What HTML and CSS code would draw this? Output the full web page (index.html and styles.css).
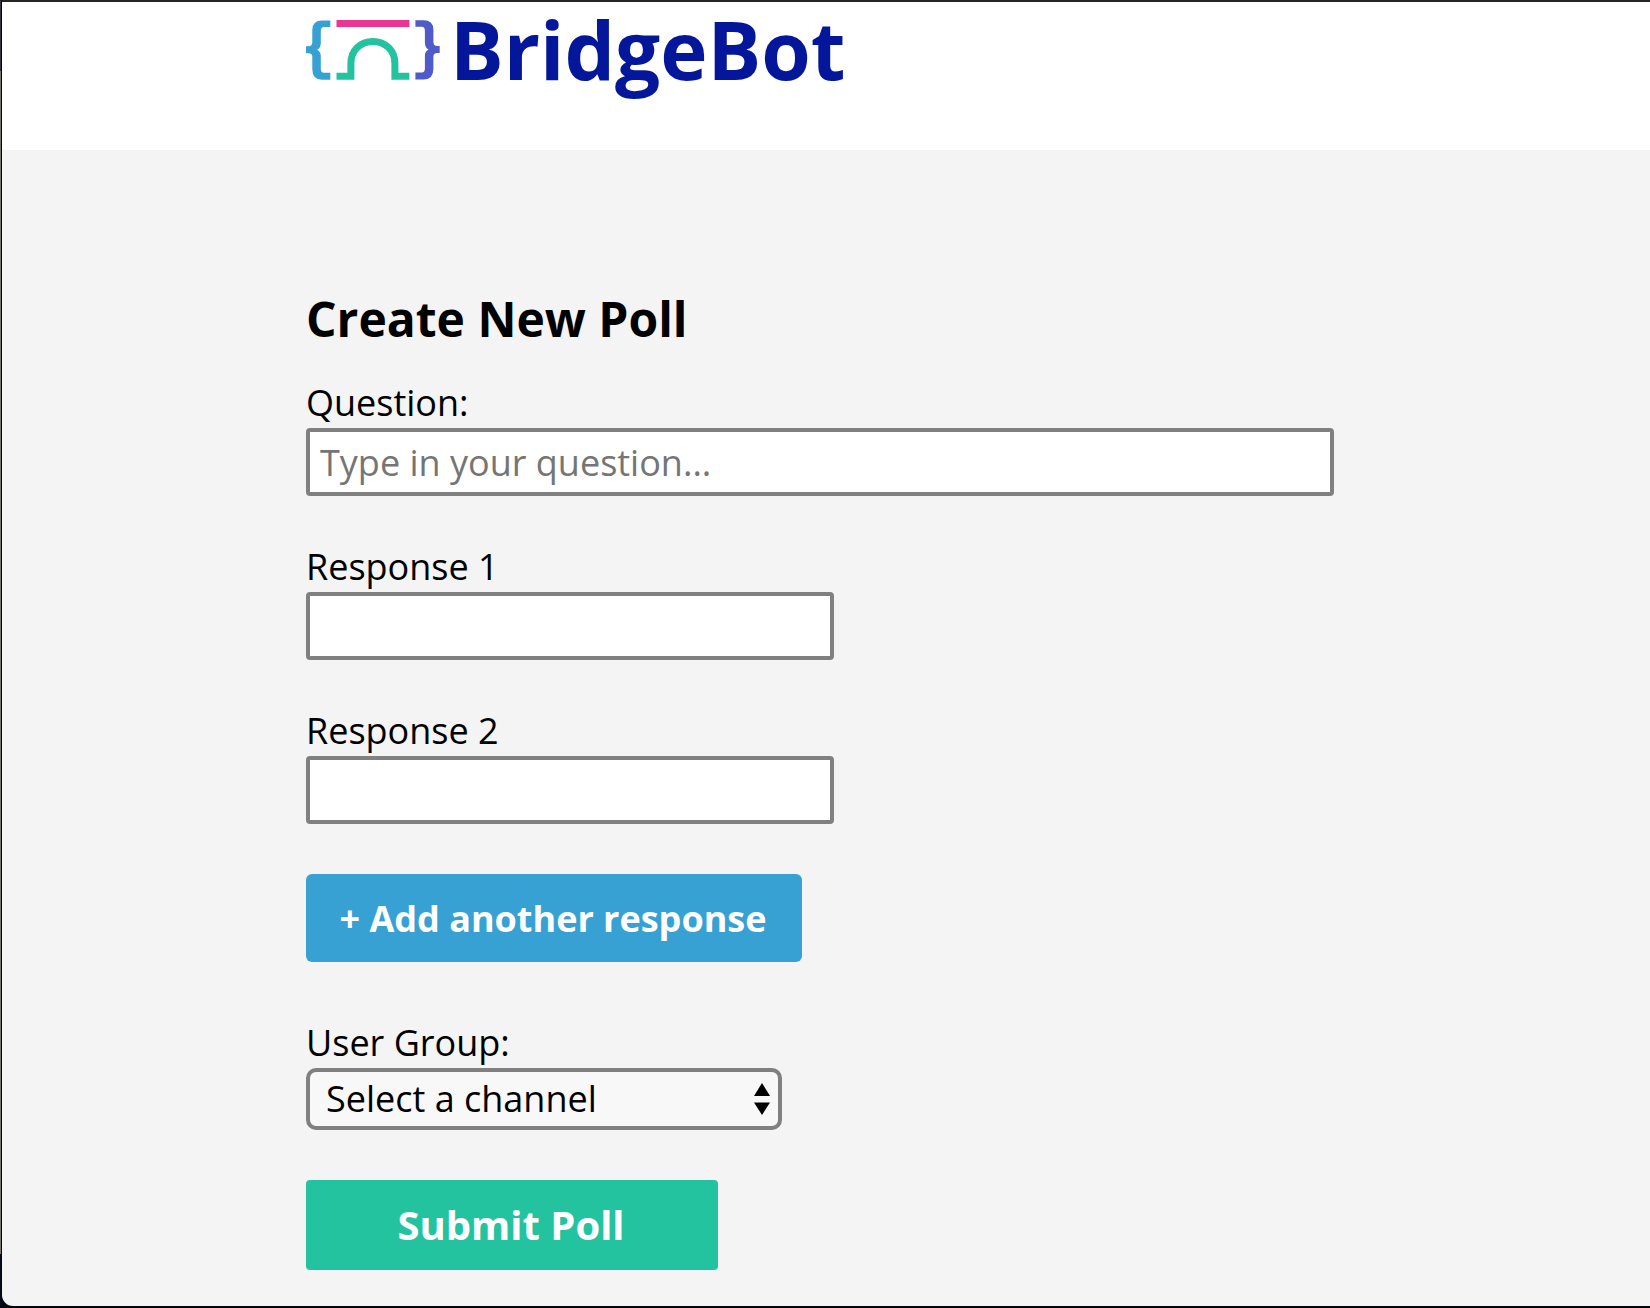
FILE: index.html
```html
<!DOCTYPE html>
<html lang="en">
<head>
<meta charset="utf-8">
<title>BridgeBot</title>
<link rel="stylesheet" href="styles.css">
</head>
<body>
<div class="window">
  <header class="header">
    <svg class="logo" width="134" height="60" viewBox="0 0 134 60">
      <defs>
        <path id="brace" d="M24.3 .5H16Q6.3 .5 6.3 10V22Q6.3 26.2 2.5 26.2H0V33.3H2.5Q6.3 33.3 6.3 37V49Q6.3 59.7 16 59.7H24.3V52.7H18Q14.8 52.7 14.8 49V36Q14.8 31.5 11 29.8Q14.8 28 14.8 23V11Q14.8 7 18 7H24.3Z"/>
      </defs>
      <use href="#brace" fill="#38a1d3"/>
      <path fill="none" stroke-width="7" stroke="#ea3595" d="M30.5 3.6H103.4"/>
      <path fill="none" stroke-width="7" stroke="#24c3a0" d="M30.5 56.2H44.9V43.3C44.9 30.5 54.4 21.4 66.9 21.4S88.9 30.5 88.9 43.3V56.2H103.4"/>
      <use href="#brace" fill="#4f5bc8" transform="translate(133.7 -.3) scale(-1 1)"/>
    </svg>
    <span class="brand">BridgeBot</span>
  </header>
  <main class="main">
    <h1 class="title">Create New Poll</h1>
    <form class="form">
      <div class="field">
        <label class="label" for="question">Question:</label>
        <input class="input input-wide" id="question" type="text" placeholder="Type in your question...">
      </div>
      <div class="field">
        <label class="label" for="response1">Response 1</label>
        <input class="input" id="response1" type="text">
      </div>
      <div class="field">
        <label class="label" for="response2">Response 2</label>
        <input class="input" id="response2" type="text">
      </div>
      <button class="button add" type="button">+ Add another response</button>
      <div class="field group">
        <label class="label" id="group-label">User Group:</label>
        <div class="select" role="combobox" aria-labelledby="group-label">
          <span>Select a channel</span>
          <svg width="16" height="32" viewBox="0 0 16 32"><path d="M8 0L16 13H0ZM0 19.5H16L8 32Z"/></svg>
        </div>
      </div>
      <button class="button submit" type="button">Submit Poll</button>
    </form>
  </main>
</div>
</body>
</html>
```
FILE: styles.css
```css
* { box-sizing: border-box; }

body {
  margin: 0;
  height: 1308px;
  overflow: hidden;
  padding: 2px 0 2px 2px;
  font-family: "Open Sans", sans-serif;
  color: #000;
  background:
    linear-gradient(#262425, #262425) 2px 0 / 100% 2px no-repeat,
    linear-gradient(#34363b 0 71px, #77736d 71px 1254px, #050b17 1254px) 0 0 / 1px 100% no-repeat,
    #02060f;
}

.window {
  height: 1304px;
  background: #f4f4f4;
  border-bottom-left-radius: 11px;
}

.header {
  display: flex;
  align-items: flex-start;
  height: 148px;
  padding-left: 304px;
  background: #fff;
}

.logo { margin-top: 18px; }

.brand {
  margin-left: 10px;
  font-size: 80px;
  line-height: 94px;
  font-weight: 700;
  color: #04179b;
}

.main { padding: 137px 0 0 304px; }

.title {
  margin: 0 0 28px;
  font-size: 48px;
  line-height: 64px;
  font-weight: 700;
}

.form {
  display: flex;
  flex-direction: column;
  align-items: flex-start;
}

.field {
  display: flex;
  flex-direction: column;
  gap: 1px;
  margin-bottom: 47px;
}

.label {
  font-size: 36px;
  line-height: 48px;
}

.input {
  width: 528px;
  height: 68px;
  padding: 0 10px;
  border: 4px solid #808080;
  border-radius: 4px;
  background: #fff;
  font: 36px/48px "Open Sans", sans-serif;
}

.input-wide { width: 1028px; }

.input::placeholder { color: #757575; }

.button {
  padding: 0 2px 0 0;
  border: 0;
  color: #fff;
  font-family: inherit;
  font-weight: 700;
}

.add {
  width: 496px;
  height: 88px;
  margin: 3px 0 57px;
  border-radius: 6px;
  background: #38a1d3;
  font-size: 36px;
}

.group { margin-bottom: 50px; }

.select {
  display: flex;
  align-items: center;
  justify-content: space-between;
  width: 476px;
  height: 62px;
  padding: 0 8px 0 16px;
  border: 4px solid #808080;
  border-radius: 10px;
  background: #f8f8f8;
  font-size: 36px;
  line-height: 54px;
}

.submit {
  width: 412px;
  height: 90px;
  padding-bottom: 2px;
  border-radius: 4px;
  background: #24c3a0;
  font-size: 40px;
}
```
